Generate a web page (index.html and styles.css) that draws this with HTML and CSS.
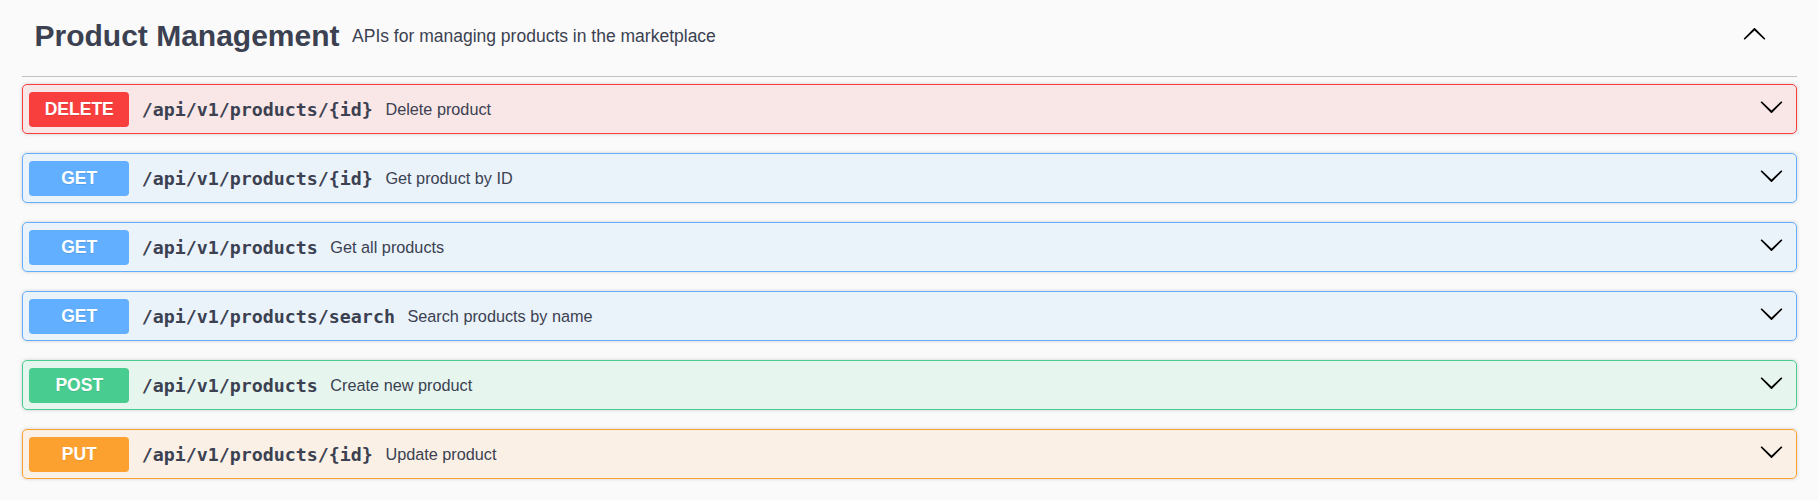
FILE: index.html
```html
<!DOCTYPE html>
<html lang="en">
<head>
<meta charset="utf-8">
<title>Product Management</title>
<link rel="stylesheet" href="styles.css">
</head>
<body>
<svg class="defs" width="0" height="0" aria-hidden="true">
  <symbol id="arrow-down" viewBox="0 0 20 20">
    <path d="M17.418 6.109c.272-.268.709-.268.979 0s.271.701 0 .969l-7.908 7.83c-.27.268-.707.268-.979 0l-7.908-7.83c-.27-.268-.27-.701 0-.969.271-.268.709-.268.979 0L10 13.25l7.418-7.141z"/>
  </symbol>
</svg>
<div class="tag-section">
  <div class="opblock-tag">
    <span class="tag-title">Product Management</span>
    <span class="tag-desc">APIs for managing products in the marketplace</span>
    <span class="expand"><svg class="up" viewBox="0 0 20 20"><use href="#arrow-down"/></svg></span>
  </div>

  <div class="opblock delete">
    <span class="method">DELETE</span>
    <span class="path">/api/v1/products/{id}</span>
    <span class="desc">Delete product</span>
    <span class="arrow"><svg viewBox="0 0 20 20"><use href="#arrow-down"/></svg></span>
  </div>
  <div class="opblock get">
    <span class="method">GET</span>
    <span class="path">/api/v1/products/{id}</span>
    <span class="desc">Get product by ID</span>
    <span class="arrow"><svg viewBox="0 0 20 20"><use href="#arrow-down"/></svg></span>
  </div>
  <div class="opblock get">
    <span class="method">GET</span>
    <span class="path">/api/v1/products</span>
    <span class="desc">Get all products</span>
    <span class="arrow"><svg viewBox="0 0 20 20"><use href="#arrow-down"/></svg></span>
  </div>
  <div class="opblock get">
    <span class="method">GET</span>
    <span class="path">/api/v1/products/search</span>
    <span class="desc">Search products by name</span>
    <span class="arrow"><svg viewBox="0 0 20 20"><use href="#arrow-down"/></svg></span>
  </div>
  <div class="opblock post">
    <span class="method">POST</span>
    <span class="path">/api/v1/products</span>
    <span class="desc">Create new product</span>
    <span class="arrow"><svg viewBox="0 0 20 20"><use href="#arrow-down"/></svg></span>
  </div>
  <div class="opblock put">
    <span class="method">PUT</span>
    <span class="path">/api/v1/products/{id}</span>
    <span class="desc">Update product</span>
    <span class="arrow"><svg viewBox="0 0 20 20"><use href="#arrow-down"/></svg></span>
  </div>
</div>
</body>
</html>
```
FILE: styles.css
```css
html, body {
  margin: 0;
  padding: 0;
  background: #fafafa;
}

body {
  font-family: "Liberation Sans", Arial, sans-serif;
  color: #3b4151;
}

.defs {
  position: absolute;
  width: 0;
  height: 0;
  overflow: hidden;
}

.tag-section {
  padding: 0 22px;
}

.opblock-tag {
  display: flex;
  align-items: center;
  box-sizing: border-box;
  height: 77px;
  padding: 0 30px 3.4px 12.5px;
  border-bottom: 1px solid rgba(59, 65, 81, 0.3);
  margin-bottom: 7.3px;
}

.tag-title {
  font-size: 30px;
  font-weight: 700;
  white-space: nowrap;
}

.tag-desc {
  flex: 2;
  font-size: 17.5px;
  padding: 0 12.5px;
}

.expand {
  display: flex;
  margin-bottom: 4px;
}

.expand svg {
  width: 25px;
  height: 25px;
  transform: rotate(180deg);
  fill: #000;
}

.opblock {
  display: flex;
  align-items: center;
  border: 1px solid #000;
  border-radius: 5px;
  box-shadow: 0 0 3.75px rgba(0, 0, 0, 0.19);
  padding: 6.25px;
  margin-bottom: 19.5px;
}

.method {
  box-sizing: border-box;
  min-width: 100px;
  padding: 7.5px 0;
  line-height: 20px;
  text-align: center;
  border-radius: 3.75px;
  color: #fff;
  font-weight: 700;
  font-size: 17.5px;
  text-shadow: 0 1.25px 0 rgba(0, 0, 0, 0.1);
}

.path {
  font-family: "DejaVu Sans Mono", "Liberation Mono", monospace;
  font-weight: 700;
  font-size: 18.3px;
  padding: 0 12.5px;
  color: #3b4151;
  white-space: nowrap;
}

.desc {
  flex: 1;
  font-size: 16.25px;
  color: #3b4151;
}

.arrow {
  display: flex;
  padding-right: 6px;
  margin-bottom: 4.5px;
}

.arrow svg {
  width: 25px;
  height: 25px;
  fill: #000;
}

.delete {
  background: rgba(249, 62, 62, 0.1);
  border-color: #f93e3e;
}
.delete .method { background: #f93e3e; }

.get {
  background: rgba(97, 175, 254, 0.1);
  border-color: #61affe;
}
.get .method { background: #61affe; }

.post {
  background: rgba(73, 204, 144, 0.1);
  border-color: #49cc90;
}
.post .method { background: #49cc90; }

.put {
  background: rgba(252, 161, 48, 0.1);
  border-color: #fca130;
}
.put .method { background: #fca130; }
```
